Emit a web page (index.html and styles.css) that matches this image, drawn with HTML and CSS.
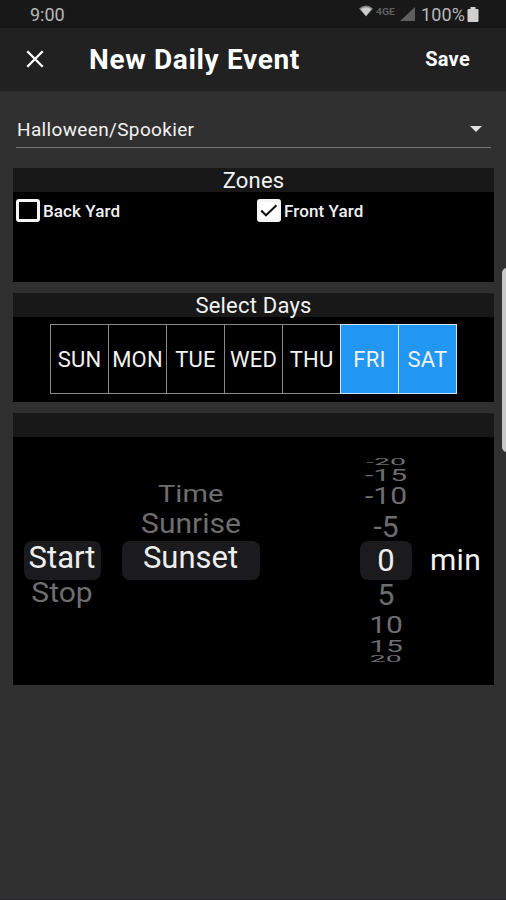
FILE: index.html
```html
<!DOCTYPE html>
<html lang="en">
<head>
    <meta charset="UTF-8">
    <meta name="viewport" content="width=device-width, initial-scale=1.0">
    <title>New Daily Event</title>
    <link rel="stylesheet" href="styles.css">
</head>
<body>

    <div class="status-bar">
        <span class="clock">9:00</span>
        <svg class="wifi" width="14" height="12" viewBox="0 0 14 12">
            <path d="M0 3.500Q7 -2.500 14 3.500L7 11.500Z" fill="#808080"/>
            <path d="M1.500 4.200Q7 0.500 12.500 4.200L7 11Z" fill="#ccc"/>
        </svg>
        <span class="lte">4GE</span>
        <svg class="signal" width="15" height="14" viewBox="0 0 15 14">
            <path d="M15 0V14H0Z" fill="#5e5e5e"/>
        </svg>
        <span class="percent">100%</span>
        <svg class="battery" width="12" height="15" viewBox="0 0 12 15">
            <path d="M3.5 0H8.500V2H10.500Q11.500 2 11.500 3V14Q11.500 15 10.500 15H1.500Q.5 15 .5 14V3Q.5 2 1.500 2H3.500Z" fill="#d0d0d0"/>
        </svg>
    </div>

    <div class="header">
        <svg class="close" width="18" height="18" viewBox="0 0 18 18">
            <path d="M1.300 1.300L16.700 16.700M16.700 1.300L1.300 16.700" stroke="#fff" stroke-width="2.300"/>
        </svg>
        <h1>New Daily Event</h1>
        <span class="save">Save</span>
    </div>

    <div class="content">
        <div class="select">
            <span>Halloween/Spookier</span>
            <svg width="12" height="6" viewBox="0 0 12 6">
                <path d="M0 0H12L6 6Z" fill="#e0e0e0"/>
            </svg>
        </div>

        <div class="panel zones">
            <h2>Zones</h2>
            <div class="zone-list">
                <label class="zone"><span class="box"></span>Back Yard</label>
                <label class="zone">
                    <span class="box checked">
                        <svg width="18" height="13" viewBox="0 0 18 13">
                            <path d="M1.200 6.500L6 11.300L16.500 1.200" fill="none" stroke="#111" stroke-width="2"/>
                        </svg>
                    </span>Front Yard
                </label>
            </div>
        </div>

        <div class="panel days">
            <h2>Select Days</h2>
            <div class="day-list">
                <span class="day">SUN</span>
                <span class="day">MON</span>
                <span class="day">TUE</span>
                <span class="day">WED</span>
                <span class="day">THU</span>
                <span class="day on">FRI</span>
                <span class="day on">SAT</span>
            </div>
        </div>

        <div class="panel timer">
            <h2></h2>
            <div class="wheels">
                <div class="wheel action">
                    <div class="item selected"><span>Start</span></div>
                    <div class="item stop"><span>Stop</span></div>
                </div>
                <div class="wheel event">
                    <div class="item time"><span>Time</span></div>
                    <div class="item sunrise"><span>Sunrise</span></div>
                    <div class="item selected"><span>Sunset</span></div>
                </div>
                <div class="wheel offset">
                    <div class="item up4"><span>-20</span></div>
                    <div class="item up3"><span>-15</span></div>
                    <div class="item up2"><span>-10</span></div>
                    <div class="item up1"><span>-5</span></div>
                    <div class="item selected"><span>0</span></div>
                    <div class="item down1"><span>5</span></div>
                    <div class="item down2"><span>10</span></div>
                    <div class="item down3"><span>15</span></div>
                    <div class="item down4"><span>20</span></div>
                </div>
                <div class="unit">min</div>
            </div>
        </div>
    </div>

    <div class="edge-handle"></div>

</body>
</html>
```

FILE: styles.css
```css
* {
    box-sizing: border-box;
}

body {
    margin: 0;
    height: 900px;
    overflow: hidden;
    position: relative;
    background-color: #303030;
    border-bottom: 1px solid #2b2028;
    font-family: Roboto, sans-serif;
    color: #f2f2f2;
}

.status-bar {
    display: flex;
    height: 28px;
    padding: 0 27px 0 30px;
    background-color: #181818;
    color: #b8b8b8;
    font-size: 18px;
    line-height: 30px;
}

.clock {
    flex: 1;
}

.wifi {
    margin-top: 5px;
}

.lte {
    width: 20px;
    margin: 0 5px 0 3px;
    font-size: 9px;
    font-weight: 700;
    line-height: 25px;
    color: #606060;
    transform: scaleX(1.15);
    transform-origin: left;
}

.signal {
    margin: 7px 6px 0 -1px;
}

.percent {
    margin-right: 2px;
    letter-spacing: 0.1px;
}

.battery {
    margin-top: 7px;
}

.header {
    display: flex;
    align-items: center;
    height: 63px;
    padding: 0 36px 1px 26px;
    background-color: #212121;
    color: white;
}

.close {
    margin-right: 45px;
}

h1 {
    flex: 1;
    margin: 0;
    font-size: 28px;
    font-weight: 700;
    letter-spacing: 0.65px;
}

.save {
    font-size: 20px;
    font-weight: 700;
    letter-spacing: 0.3px;
}

.content {
    padding: 21px 12px 0 13px;
}

.select {
    display: flex;
    align-items: center;
    justify-content: space-between;
    height: 36px;
    margin: 0 3px 20px;
    padding: 0 9px 1px 1px;
    border-bottom: 1px solid #747474;
    font-size: 19px;
    letter-spacing: 0.35px;
}

.panel {
    background-color: black;
    margin-bottom: 11px;
}

h2 {
    height: 24px;
    margin: 0;
    background-color: #181818;
    font-size: 22px;
    font-weight: 400;
    line-height: 25px;
    letter-spacing: 0.2px;
    text-align: center;
}

.zones {
    height: 114px;
}

.zone-list {
    display: grid;
    grid-template-columns: 241px 1fr;
    padding: 7px 3px;
}

.zone {
    display: flex;
    align-items: center;
    font-size: 17px;
    font-weight: 500;
    line-height: 22px;
    letter-spacing: 0.1px;
}

.box {
    display: flex;
    align-items: center;
    justify-content: center;
    width: 24px;
    height: 23px;
    margin-right: 3px;
    border: 3px solid #f5f5f5;
    border-radius: 3px;
}

.box svg {
    flex: none;
}

.checked {
    background-color: white;
}

.days {
    height: 109px;
}

.day-list {
    display: flex;
    margin: 7px 0 0 37px;
}

.day {
    width: 59px;
    height: 70px;
    margin-right: -1px;
    border: 1px solid #8a8a8a;
    font-size: 22px;
    line-height: 70px;
    letter-spacing: 0.2px;
    text-align: center;
}

.on {
    background-color: #2196f3;
    border-color: #cfe6fa;
}

.timer {
    height: 272px;
}

.wheels {
    display: flex;
    align-items: flex-start;
    padding-left: 11px;
    font-size: 30px;
}

.item {
    display: flex;
    align-items: center;
    justify-content: center;
    color: #6e6e6e;
}

.selected {
    height: 39px;
    border-radius: 8px;
    background-color: #1b1b1d;
    color: #eee;
    font-size: 31px;
}

.action {
    width: 77px;
    padding-top: 104px;
}

.event {
    width: 138px;
    margin-left: 21px;
    padding-top: 43px;
}

.action .selected,
.event .selected {
    padding-right: 1px;
    padding-bottom: 6px;
}

.offset {
    width: 52px;
    margin-left: 100px;
    padding-top: 19px;
}

.unit {
    margin: 105px 0 0 18px;
    letter-spacing: 0.3px;
}

/* rows get flatter the further they are from the selected one */
.stop {
    height: 24px;
    padding-right: 1px;
}

.stop span {
    transform: scaleY(0.93);
}

.time {
    height: 27px;
}

.time span {
    transform: scale(0.97, 0.78);
}

.sunrise {
    height: 34px;
    padding-bottom: 2px;
}

.sunrise span {
    transform: scaleY(0.9);
}

.up4 {
    height: 13px;
}

.up3 {
    height: 12px;
}

.up2,
.up1 {
    height: 30px;
}

.up2 {
    padding-bottom: 1px;
}

.down1 {
    height: 28px;
}

.down2 {
    height: 32px;
}

.down3 {
    height: 13px;
}

.down4 {
    height: 12px;
}

.up1 span,
.down1 span {
    transform: scaleY(0.97);
}

.up2 span,
.down2 span {
    transform: scaleY(0.8);
}

.up3 span,
.down3 span {
    transform: scaleY(0.52);
}

.up4 span,
.down4 span {
    transform: scale(0.95, 0.28);
}

.edge-handle {
    position: absolute;
    top: 268px;
    right: -6px;
    width: 10px;
    height: 184px;
    border-radius: 5px;
    background-color: #c8c8c8;
}
```
